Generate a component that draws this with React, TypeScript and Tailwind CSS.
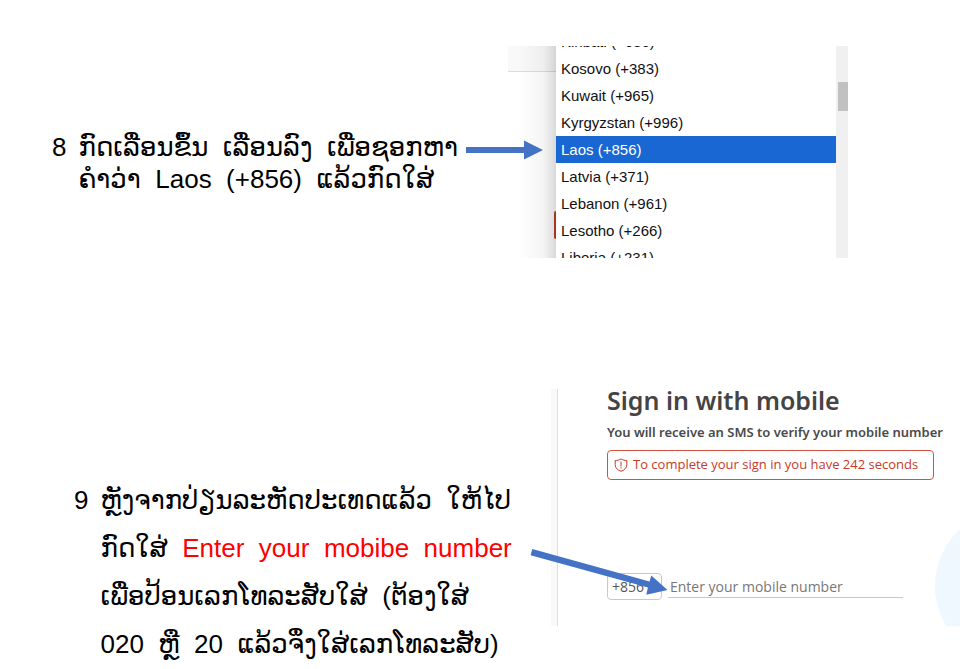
const countries = [
  "Kiribati (+686)",
  "Kosovo (+383)",
  "Kuwait (+965)",
  "Kyrgyzstan (+996)",
  "Laos (+856)",
  "Latvia (+371)",
  "Lebanon (+961)",
  "Lesotho (+266)",
  "Liberia (+231)",
];

function CountryPicker() {
  return (
    <div className="flex h-[212px] w-[340px] overflow-hidden bg-white">
      <div className="relative flex w-12 shrink-0 flex-col">
        <div className="h-[26px] border-b border-[#dcdcdc] bg-[#f9f9f9]" />
        <div className="flex flex-1 flex-col items-end bg-white pt-[139px]">
          <div className="h-7 w-[2px] rounded-l-sm bg-[#c93a26]" />
        </div>
        <div className="absolute inset-0 border-r border-black/15 bg-linear-to-r from-transparent from-20% via-black/4 via-75% to-black/14" />
      </div>
      <select
        aria-label="Country code"
        size={9}
        className="-mt-[18px] block h-[243px] min-w-0 flex-1 appearance-none overflow-hidden bg-white p-0 font-['Liberation_Sans',sans-serif] text-[15px] text-[#111] outline-none"
      >
        {countries.map((name) => (
          <option
            key={name}
            className={
              name.startsWith("Laos")
                ? "h-[27px] min-h-0 bg-[#1967d2] px-[5px] pt-[5px] pb-0 text-white"
                : "h-[27px] min-h-0 px-[5px] pt-[5px] pb-0"
            }
          >
            {name}
          </option>
        ))}
      </select>
      <div className="w-3 shrink-0 bg-[#f0f0f0] pt-9 pl-[2px]">
        <div className="h-[29px] bg-[#c1c1c1]" />
      </div>
    </div>
  );
}

function SignInPanel() {
  return (
    <div className="flex h-[237px] min-w-0 font-['Open_Sans','Noto_Sans',sans-serif]">
      <div className="w-[7px] shrink-0 border-r border-[#dedede] bg-[#f9f9f9]" />
      <form className="relative min-w-0 flex-1 pl-[49px]">
        <div className="absolute inset-y-0 right-0 w-[25px] overflow-hidden">
          <div className="mt-[119px] size-[156px] rounded-full bg-[#f0f8ff]" />
        </div>
        <h1 className="-mt-[6px] font-['Noto_Sans',sans-serif] text-[25px] leading-[34px] font-semibold whitespace-nowrap text-[#444]">
          Sign in with mobile
        </h1>
        <p className="mt-[5px] font-['Noto_Sans',sans-serif] text-[13px] leading-5 font-semibold whitespace-nowrap text-[#4a4a4a]">
          You will receive an SMS to verify your mobile number
        </p>
        <div
          role="alert"
          className="mt-2 flex h-[30px] w-[327px] items-center gap-[5px] rounded-[4px] border border-[#d4523f] pl-[6px] text-[13px] whitespace-nowrap text-[#c93a26]"
        >
          <svg viewBox="0 0 14 14" className="size-[14px]" fill="none" stroke="currentColor">
            <path d="M7 .9C5.300 2 3.300 2.500 1.200 2.500v4.200c0 3.200 2.200 5.300 5.800 6.600 3.600-1.300 5.800-3.400 5.800-6.600V2.500C10.700 2.500 8.700 2 7 .9Z" />
            <path d="M7 3.500v5M7 9.200v1.300" />
          </svg>
          To complete your sign in you have 242 seconds
        </div>
        <div className="mt-[93px] flex items-start gap-[6px]">
          <button
            type="button"
            className="h-[27px] w-[55px] rounded-[4px] border border-[#c8c8c8] pl-1 text-left text-sm text-[#555]"
          >
            +856
          </button>
          <input
            type="tel"
            aria-label="Enter your mobile number"
            placeholder="Enter your mobile number"
            className="h-[25px] w-[235px] border-b border-[#c8c8c8] pt-[2px] pl-[2px] text-sm outline-none placeholder:text-[#777]"
          />
        </div>
      </form>
    </div>
  );
}

export default function App() {
  return (
    <main className="overflow-hidden bg-white font-['Liberation_Sans','DejaVu_Sans',sans-serif] text-[26px] text-black">
      <section className="relative grid grid-cols-[508fr_452fr] pt-[46px]">
        <div className="flex gap-3 pt-[85px] pl-[52px] leading-8 whitespace-pre">
          <span>8</span>
          <p>
            ກົດເລື່ອນຂຶ້ນ  ເລື່ອນລົງ  ເພື່ອຊອກຫາ
            <br />
            ຄຳວ່າ  Laos  (+856)  ແລ້ວກົດໃສ່
          </p>
        </div>
        <CountryPicker />
        <svg viewBox="0 0 78 20" className="absolute top-[140px] left-[466px] h-5 w-[78px]" fill="#4472c4">
          <path d="M0 7h58V0.500L77 10 58 19.500V13H0Z" />
        </svg>
      </section>
      <section className="relative grid grid-cols-[551fr_409fr] pt-[131px]">
        <div className="flex min-w-0 gap-3 pt-[87px] pl-[74px] leading-12 whitespace-pre">
          <span>9</span>
          <p>
            ຫຼັງຈາກປ່ຽນລະຫັດປະເທດແລ້ວ  ໃຫ້ໄປ
            <br />
            ກົດໃສ່  <span className="text-[#ff0000]">Enter  your  mobibe  number</span>
            <br />
            ເພື່ອປ້ອນເລກໂທລະສັບໃສ່  (ຕ້ອງໃສ່
            <br />
            020  ຫຼື  20  ແລ້ວຈຶ່ງໃສ່ເລກໂທລະສັບ)
          </p>
        </div>
        <SignInPanel />
        <svg viewBox="0 0 140 48" className="absolute top-[290px] left-[529px] h-12 w-[140px]" fill="#4472c4">
          <path d="M3.300 1 120.500 33.400 122.300 27.500 138.500 42 117.300 46.800 118.900 39.600 1.600 7.300Z" />
        </svg>
      </section>
    </main>
  );
}
